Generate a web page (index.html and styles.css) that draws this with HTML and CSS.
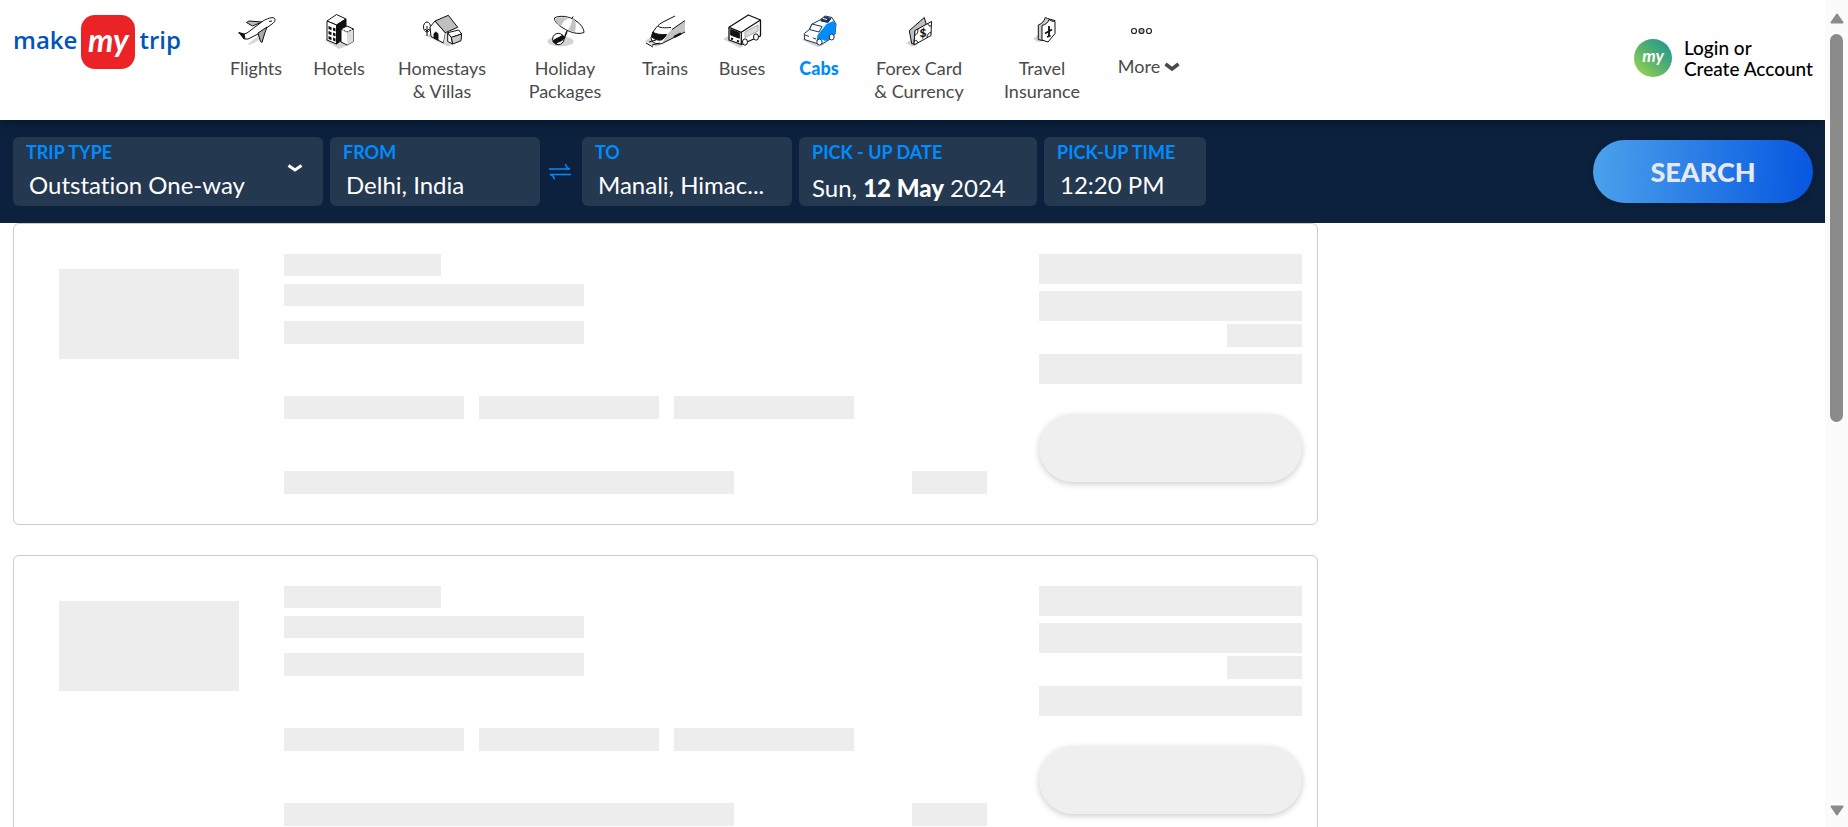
FILE: index.html
```html
<!DOCTYPE html>
<html lang="en">
<head>
<meta charset="utf-8">
<title>MakeMyTrip - Cabs</title>
<link rel="stylesheet" href="styles.css">
</head>
<body>
<div class="window">
<div class="page">
  <header class="header">
    <a class="logo" href="#" aria-label="makemytrip">
      <span>make</span><span class="logo-mark">my</span><span>trip</span>
    </a>
    <nav class="nav">
      <a class="nav-item" href="#">
        <svg class="nav-icon" viewBox="0 0 40 40" fill="#fff" stroke="#111" stroke-width="1" stroke-linejoin="round">
          <path d="M12 32l10-8 5 1-9 6-5 2z" fill="#d8d8d8" stroke="none"/>
          <path d="M16.500 14L10.500 10.500 13 9l13 1z" fill="#bbb"/>
          <path d="M3 20.500l5 1.500 3 4-3 1z" fill="#111"/>
          <path d="M8 22l3-1 16-12c4-2.500 9-4 11-3 2 1 1 4-2 6L22 22l-10 5-3 0z"/>
          <path d="M22 21l9-6-2.500 7-2.500 8.500-1.500-1z" fill="#aaa"/>
          <path d="M33 9.500l3-.5M2.500 21l6 1.500" fill="none"/>
        </svg>
        <span>Flights</span>
      </a>
      <a class="nav-item" href="#">
        <svg class="nav-icon" viewBox="0 0 40 40" fill="#fff" stroke="#111" stroke-width="1" stroke-linejoin="round">
          <path d="M5 28l15 9 10-4-7-7z" fill="#d4d4d4" stroke="none"/>
          <path d="M8 9l9.500-6.500L27 7l-9.500 6z"/>
          <path d="M8 9l9.500 4v19L8 28z"/>
          <path d="M17.500 13L27 7v18l-9.500 7z" fill="#111"/>
          <path d="M9.500 14l3 1.200v3l-3-1.200zM14 15.500l2.500 1v3l-2.500-1zM9.500 19l3 1.200v3l-3-1.200zM14 20.500l2.500 1v3l-2.500-1zM9.500 24l3 1.200v3l-3-1.200zM14 25.500l2.500 1v3l-2.500-1z" fill="#111" stroke="none"/>
          <path d="M22 17l6-3 6.500 3v12.500L28 33l-6-3z"/>
          <path d="M28 20l6.500-3v12.500L28 33z" fill="#ddd" stroke="none"/>
          <path d="M22 17l6 3 6.500-3" fill="none" stroke-dasharray="2 1"/>
        </svg>
        <span>Hotels</span>
      </a>
      <a class="nav-item" href="#">
        <svg class="nav-icon" viewBox="0 0 40 40" fill="#fff" stroke="#111" stroke-width="1" stroke-linejoin="round">
          <path d="M2 23l8-1 30 7-14 5.500z" fill="#d4d4d4" stroke="none"/>
          <ellipse cx="5" cy="15" rx="3.500" ry="5"/>
          <path d="M5 14v10M3 17l2 2 2-2" fill="none"/>
          <path d="M13 9l-5 6 1 9.500 12.500 6.500 2-10z"/>
          <path d="M13 9l13.300-5.700 9.400 12-12.400 5.400z" fill="#bfbfbf"/>
          <path d="M12 26v-4c1-3 4-2 4 1v5z" fill="#111"/>
          <path d="M21.500 31l2-10 3 0v9z" fill="#ddd" stroke="none"/>
          <path d="M25.700 20.700l3.600 4.600L30.700 32l-5-2.500z"/>
          <path d="M25.700 20.700l11-2.700 3 4-10.400 3.500z"/>
          <path d="M29.300 25.300L39.700 22l-.7 6.700L30.700 32z" fill="#ccc"/>
        </svg>
        <span>Homestays<br>&amp; Villas</span>
      </a>
      <a class="nav-item" href="#">
        <svg class="nav-icon" viewBox="0 0 40 40" fill="#fff" stroke="#111" stroke-width="1" stroke-linejoin="round">
          <ellipse cx="15.500" cy="29.500" rx="13" ry="5" fill="#d4d4d4" stroke="none"/>
          <path d="M22 19l-3 8" stroke-width="1.500"/>
          <circle cx="13.300" cy="27" r="5.700"/>
          <path d="M8 29.500c1-3 6-3 9.500-6.500l1.500 3c-2 4-6 3-8 6z" fill="#111"/>
          <path d="M9.500 6C14 3 25 4 31 9c5 3 8 8 8 11.500-6 2.500-15-.5-21-4.500C13 13 9 9 9.500 6z"/>
          <path d="M11 6c4-1 9-1 14 0-5 1-8 5-9 8.500C12 12 10 9 11 6zM27 6.500c3 1 5 4 3 13.500l-7-2c3-4 4-8 4-11.500z" fill="#c4c4c4" stroke="none"/>
          <path d="M27 6.500l1-2"/>
        </svg>
        <span>Holiday<br>Packages</span>
      </a>
      <a class="nav-item" href="#">
        <svg class="nav-icon" viewBox="0 0 40 40" fill="#fff" stroke="#111" stroke-width="1" stroke-linejoin="round">
          <path d="M0 29l9-6 8 9-6 3z" fill="#d4d4d4" stroke="none"/>
          <path d="M30 4l-12 6C13 12.500 8 18 6 26l1 3c3 3 7 3.500 10 2.500 3-5 4-9 10-14L40 8.500" stroke="none"/>
          <path d="M30 4l-12 6C13 12.500 8 18 6 26l1 3c3 3 7 3.500 10 2.500" fill="none"/>
          <path d="M17 31.500c3-5 4-9 10-14L40 8.500V20z" fill="#c4c4c4" stroke="none"/>
          <path d="M7.500 20c3 2 8 3 14 2.500-1.500 3-3 4-5 5.500-4 .5-7-.5-9.500-3z" fill="#111"/>
          <path d="M13 14c2 2 6 2 13 1.500M1 31l7 4M4 30l7-2M7 33l8-2" fill="none"/>
          <path d="M17 31.500l23-11.500M27 17.500l13-9" fill="none"/>
          <path d="M29 25l7-3.500" stroke-width="2.500"/>
        </svg>
        <span>Trains</span>
      </a>
      <a class="nav-item" href="#">
        <svg class="nav-icon" viewBox="0 0 40 40" fill="#fff" stroke="#111" stroke-width="1" stroke-linejoin="round">
          <path d="M1 27l7-4 14 10-4 3z" fill="#d4d4d4" stroke="none"/>
          <path d="M7 15.300L26.300 3 38.500 8v16L19.300 32.500 7 28z" stroke-width="1.300"/>
          <path d="M7 15.300l12.300 5L38.500 8M19.300 20.300v12" fill="none" stroke-width="1.300"/>
          <path d="M8.700 17.500l8.600 3.200v5.500l-8.600-3.200z" fill="#111"/>
          <path d="M23 20l13-7v6l-13 6.500z" fill="#ddd" stroke="#aaa"/>
          <path d="M9 26.500l2 .8M15 28.800l2 .8" stroke-width="2"/>
          <ellipse cx="23" cy="30" rx="2.500" ry="3.200"/>
          <ellipse cx="34" cy="25" rx="2.500" ry="3.200"/>
        </svg>
        <span>Buses</span>
      </a>
      <a class="nav-item nav-item-active" href="#" aria-current="page">
        <svg class="nav-icon" viewBox="0 0 40 40" fill="#fff" stroke="#1d3557" stroke-width="1" stroke-linejoin="round">
          <path d="M3 28l4-3 30-2-14 11-5 1z" fill="#d4d4d4" stroke="none"/>
          <path d="M5.300 21.500l5-4L13 12l8-4 5-4 7 1.500L37 12l-1 10-5 5-8 5-5-.5-12.500-4z"/>
          <path d="M17.500 29l1-6 5-6 4-5 7-3 2.500 3.500-1 10-3 1-3 4-4 1.500-4-2z" fill="#008cff" stroke="none"/>
          <path d="M13 12l10 2.500-3 5.500-9.500-2.500z"/>
          <path d="M22 8l4-3 6 1.500-3 4-7-1.500z" fill="#1d3557"/>
          <path d="M24 6.500l4 1" stroke="#fff"/>
          <path d="M6 23l4 1.500M14 26l3 1" fill="none"/>
          <ellipse cx="20.500" cy="30" rx="2.700" ry="3"/>
          <ellipse cx="32.700" cy="25" rx="2.500" ry="3"/>
        </svg>
        <span>Cabs</span>
      </a>
      <a class="nav-item" href="#">
        <svg class="nav-icon" viewBox="0 0 40 40" fill="#fff" stroke="#111" stroke-width="1" stroke-linejoin="round">
          <path d="M7 31l5-3 7 5-6 1.500z" fill="#d4d4d4" stroke="none"/>
          <path d="M10.300 18.700l15-13.200 2 7L16 19l-1 13-2.300-.5z" fill="#bfbfbf"/>
          <path d="M16 18.500l16.500-9L32 23.500 15 33z"/>
          <path d="M15.800 23c2 0 3.500-3 3-6M15 29c2-1 4 0 4 2M29 11.500c0 2 1.500 3 3.300 2.500M28 25.500c0-3 2-5 4-5" fill="none"/>
          <text x="24" y="25" class="icon-currency" text-anchor="middle">$</text>
        </svg>
        <span>Forex Card<br>&amp; Currency</span>
      </a>
      <a class="nav-item" href="#">
        <svg class="nav-icon" viewBox="0 0 40 40" fill="#fff" stroke="#111" stroke-width="1" stroke-linejoin="round">
          <path d="M11 27l5-4 6 6-6 1z" fill="#d4d4d4" stroke="none"/>
          <path d="M16.300 13c4-1.500 6-4 7-7.500 3 1.500 6 2 9.700 3l-6 10-6.700 10-4-1z" fill="#ccc"/>
          <path d="M20 13.500c4-1 6-3 7-6 2 1.500 4 2 6 2v12l-7 8.500-6-2z"/>
          <path d="M27 14v11M23 21.500l7-4M25 25l3.500-1.500" fill="none" stroke-width="1.800"/>
        </svg>
        <span>Travel<br>Insurance</span>
      </a>
      <a class="nav-item nav-more" href="#">
        <svg class="more-icon" viewBox="0 0 62 38" fill="#fff" stroke="#222" stroke-width="1.200">
          <circle cx="16" cy="19" r="2.500"/><circle cx="23.500" cy="19" r="2.500" fill="#bbb"/><circle cx="31" cy="19" r="2.500"/>
        </svg>
        <span class="more-label">More
          <svg class="chevron" viewBox="0 0 16 10" fill="none" stroke="#4a4a4a" stroke-width="3.500"><path d="M1.500 2L8 7l6.500-5"/></svg>
        </span>
      </a>
    </nav>
    <a class="login" href="#">
      <span class="avatar">my</span>
      <span>Login or<br>Create Account</span>
    </a>
  </header>

  <form class="search">
    <div class="field field-type">
      <label for="trip">TRIP TYPE</label>
      <select id="trip"><option>Outstation One-way</option></select>
      <svg class="chevron field-chevron" viewBox="0 0 16 10" fill="none" stroke="#fff" stroke-width="3"><path d="M1.500 2.500L8 7l6.500-4.500"/></svg>
    </div>
    <div class="field field-place">
      <label for="from">FROM</label>
      <input id="from" type="text" value="Delhi, India">
    </div>
    <button class="swap" type="button" aria-label="Swap cities">
      <svg viewBox="0 0 22 18" fill="none" stroke="#008cff" stroke-width="1.500"><path d="M0 6h21c-2-.5-4-2-4.500-5M22 11.500H1c2 .5 4 2 4.500 5"/></svg>
    </button>
    <div class="field field-place">
      <label for="to">TO</label>
      <input id="to" type="text" value="Manali, Himac...">
    </div>
    <div class="field field-date">
      <label for="date">PICK - UP DATE</label>
      <button id="date" class="date" type="button">Sun, <b>12 May</b> 2024</button>
    </div>
    <div class="field field-time">
      <label for="time">PICK-UP TIME</label>
      <input id="time" type="text" value="12:20 PM">
    </div>
    <button class="submit" type="submit">SEARCH</button>
  </form>

  <main class="results">
    <article class="card">
      <div class="bone photo"></div>
      <div class="details">
        <div class="bone name"></div>
        <div class="bone line"></div>
        <div class="bone line"></div>
        <div class="tags"><div class="bone"></div><div class="bone"></div><div class="bone"></div></div>
        <div class="foot"><div class="bone foot-text"></div><div class="bone short"></div></div>
      </div>
      <div class="price">
        <div class="bone"></div>
        <div class="bone"></div>
        <div class="bone short"></div>
        <div class="bone"></div>
        <button class="book" type="button" aria-label="Select cab" disabled></button>
      </div>
    </article>
    <article class="card">
      <div class="bone photo"></div>
      <div class="details">
        <div class="bone name"></div>
        <div class="bone line"></div>
        <div class="bone line"></div>
        <div class="tags"><div class="bone"></div><div class="bone"></div><div class="bone"></div></div>
        <div class="foot"><div class="bone foot-text"></div><div class="bone short"></div></div>
      </div>
      <div class="price">
        <div class="bone"></div>
        <div class="bone"></div>
        <div class="bone short"></div>
        <div class="bone"></div>
        <button class="book" type="button" aria-label="Select cab" disabled></button>
      </div>
    </article>
  </main>
</div>
<div class="scrollbar" aria-hidden="true">
  <svg viewBox="0 0 14 11"><path d="M7 1.500L12.500 9.500h-11z"/></svg>
  <div class="track"><div class="thumb"></div></div>
  <svg viewBox="0 0 14 11"><path d="M7 9.500L1.500 1.500h11z"/></svg>
</div>
</div>
</body>
</html>
```

FILE: styles.css
```css
* { box-sizing: border-box; }

body {
  margin: 0;
  background: #fff;
  color: #4a4a4a;
  font-family: Lato, "Liberation Sans", sans-serif;
  font-size: 18px;
  font-variant-ligatures: none;
}

a { color: inherit; text-decoration: none; }

button, input, select { font: inherit; font-variant-ligatures: none; border: 0; }

.window { display: flex; height: 100vh; overflow: hidden; }

.page { flex: 1; min-width: 0; overflow: hidden; }

/* Header */
.header {
  position: relative;
  display: flex;
  align-items: flex-start;
  height: 120px;
  padding: 0 12px 0 13px;
  background: #fff;
  box-shadow: 0 2px 10px rgba(0, 20, 30, 0.7);
}

.logo {
  display: flex;
  align-items: center;
  gap: 4px;
  width: 201px;
  margin-top: 15px;
  color: #0056b8;
  font-family: "Open Sans", sans-serif;
  font-size: 24px;
  font-weight: 600;
  line-height: 50px;
}

.logo span:not(.logo-mark) { padding-bottom: 4px; }

.logo-mark {
  width: 54px;
  height: 54px;
  border-radius: 14px;
  background: #eb2226;
  color: #fff;
  font-family: Lato, sans-serif;
  font-size: 32px;
  font-style: italic;
  font-weight: 700;
  text-align: center;
}

.nav {
  display: grid;
  grid-template-columns: 84px 82px 124px 122px 78px 76px 78px 122px 124px 90px;
}

.nav-item {
  display: flex;
  flex-direction: column;
  align-items: center;
  gap: 5px;
  padding-top: 12px;
  line-height: 23px;
  text-align: center;
}

.nav-item-active { color: #008cff; font-weight: 900; }

.nav-icon { width: 40px; height: 40px; }

.icon-currency {
  fill: #111;
  stroke: none;
  font-size: 12px;
  font-weight: 900;
}

.more-icon { width: 62px; height: 38px; }

.more-label { display: flex; align-items: center; gap: 4px; }

.chevron { width: 16px; height: 10px; }

.login {
  display: flex;
  align-items: center;
  gap: 12px;
  margin: 37px 0 0 auto;
  color: #000;
  font-size: 19px;
  font-weight: 500;
  line-height: 21px;
}

.avatar {
  width: 38px;
  height: 38px;
  border-radius: 50%;
  background: linear-gradient(45deg, #a0d94a, #4fae72 55%, #159394);
  color: #fff;
  font-size: 17px;
  font-style: italic;
  font-weight: 700;
  line-height: 34px;
  text-align: center;
}

/* Search bar */
.search {
  display: flex;
  align-items: center;
  gap: 7px;
  height: 103px;
  padding: 0 12px 0 13px;
  background: #0c213d;
}

.field {
  position: relative;
  height: 69px;
  padding: 4px 13px;
  border-radius: 6px;
  background: #243850;
}

.field-type { width: 310px; }
.field-place { width: 210px; }
.field-date { width: 238px; }
.field-time { width: 162px; }

.field label {
  display: block;
  color: #008cff;
  font-weight: 700;
  line-height: 23px;
}

.field input, .field select, .date {
  display: block;
  width: 100%;
  height: 32px;
  margin-top: 5px;
  padding: 0 0 0 3px;
  background: transparent;
  color: #fff;
  font-size: 24px;
  line-height: 32px;
}

.field select { appearance: none; }

.field .date { height: 38px; padding: 0; line-height: 38px; text-align: left; }

.date b { font-weight: 900; }

.field-chevron { position: absolute; top: 26px; right: 20px; }

.swap {
  width: 28px;
  height: 28px;
  padding: 0 4px 0 2px;
  background: transparent;
}

.swap svg { display: block; width: 22px; height: 18px; }

.submit {
  width: 220px;
  height: 63px;
  margin-left: auto;
  border-radius: 32px;
  background: linear-gradient(93deg, #4ba2eb, #0656e0);
  box-shadow: 0 1px 7px rgba(0, 0, 0, 0.2);
  color: #e5e9f0;
  font-size: 27px;
  font-weight: 900;
}

/* Loading cards */
.results {
  display: flex;
  flex-direction: column;
  gap: 30px;
  width: 1318px;
  padding-left: 13px;
}

.card {
  display: flex;
  padding: 30px 15px 30px 45px;
  border: 1px solid #ccc;
  border-radius: 6px;
}

.bone { height: 23px; background: #ededed; }

.photo { width: 180px; height: 90px; margin: 15px 45px 0 0; }

.details { display: flex; flex: 1; flex-direction: column; }

.name { width: 157px; height: 22px; }

.line { width: 300px; height: 22px; margin-top: 8px; }

.line + .line { height: 23px; margin-top: 15px; }

.tags { display: flex; gap: 15px; margin-top: 52px; }

.tags .bone { width: 180px; }

.foot { display: flex; justify-content: space-between; margin-top: 52px; }

.foot-text { width: 450px; }

.short { width: 75px; }

.price {
  display: flex;
  flex-direction: column;
  width: 263px;
  margin-left: 52px;
}

.price .bone:not(.short) { height: 30px; }

.price .bone + .bone { margin-top: 7px; }

.price .bone + .short { align-self: flex-end; margin-top: 3px; }

.book {
  height: 68px;
  margin-top: 30px;
  border-radius: 34px;
  background: #efefef;
  box-shadow: 0 2px 6px rgba(0, 0, 0, 0.2);
}

/* Page scrollbar */
.scrollbar {
  display: flex;
  flex-direction: column;
  align-items: center;
  gap: 10px;
  width: 23px;
  padding: 13px 0 11px;
  background: #fbfbfb;
}

.scrollbar svg {
  width: 14px;
  height: 11px;
  fill: #8b8b8b;
  stroke: #8b8b8b;
  stroke-width: 2;
  stroke-linejoin: round;
}

.track { flex: 1; }

.thumb { width: 13px; height: 51%; border-radius: 7px; background: #8b8b8b; }
```
